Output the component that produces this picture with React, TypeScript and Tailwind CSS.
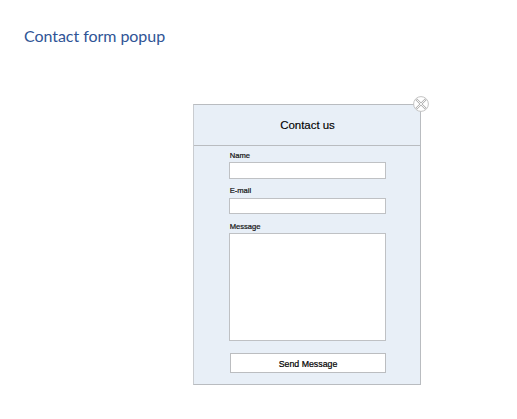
import React from 'react';

function CloseButton() {
  return (
    <button aria-label="Close" className="absolute -top-[9px] -right-[9px] h-4 w-4">
      <svg viewBox="0 0 16 16" className="block h-4 w-4" fill="none">
        <circle cx="8" cy="8" r="7.4" fill="#fff" stroke="#bdbdbd" strokeWidth="0.9" />
        <path d="M3.2 3.2 12.8 12.8M12.8 3.2 3.2 12.8" stroke="#b0b0b0" strokeWidth="2.3" />
        <path d="M3.5 3.5 12.5 12.5M12.5 3.5 3.5 12.5" stroke="#fff" strokeWidth="0.9" />
      </svg>
    </button>
  );
}

function Label({ text, id }: { text: string; id: string }) {
  return (
    <label htmlFor={id} className="block h-[11px] pl-[0.7px] text-[7.6px] leading-[11px] text-[#111] [-webkit-text-stroke:0.2px_#111]">
      {text}
    </label>
  );
}

const field = 'block w-[157px] resize-none border border-[#bfc1c4] bg-white px-1 text-[8px] outline-none';

export default function App() {
  return (
    <main className="h-[419px] w-[517px] overflow-hidden bg-white pt-[25px] font-['Liberation_Sans',Arial,sans-serif]">
      <h1 className="ml-6 h-[22px] w-max font-['Lato',sans-serif] text-[16px] leading-[22px] tracking-[-0.05px] text-[#2f5496]">
        Contact form popup
      </h1>
      <section className="relative mt-[57px] ml-[193px] h-[281px] w-[228px] border border-[#b9bcc0] border-l-[#c9ccd0] bg-[#e8eff7]">
        <header className="flex h-[41px] items-center justify-center border-b border-[#b9bcc0] pt-0.5 pl-px text-[11.5px] tracking-[-0.05px] text-black [-webkit-text-stroke:0.15px_#000]">
          Contact us
        </header>
        <form className="pt-1 pl-[35px]">
          <Label text="Name" id="name" />
          <input id="name" className={`${field} mt-[1px] h-[17px]`} />
          <div className="mt-[6px]">
            <Label text="E-mail" id="email" />
          </div>
          <input id="email" className={`${field} mt-[2px] h-[16px]`} />
          <div className="mt-[7px]">
            <Label text="Message" id="message" />
          </div>
          <textarea id="message" className={`${field} mt-[1px] h-[108px]`} />
          <button type="button" className="mt-[12px] ml-px flex h-5 w-[156px] items-center justify-center border border-[#bbbdc0] bg-white pt-0.5 text-[8.8px] leading-none text-black [-webkit-text-stroke:0.2px_#000]">
            Send Message
          </button>
        </form>
        <CloseButton />
      </section>
    </main>
  );
}
